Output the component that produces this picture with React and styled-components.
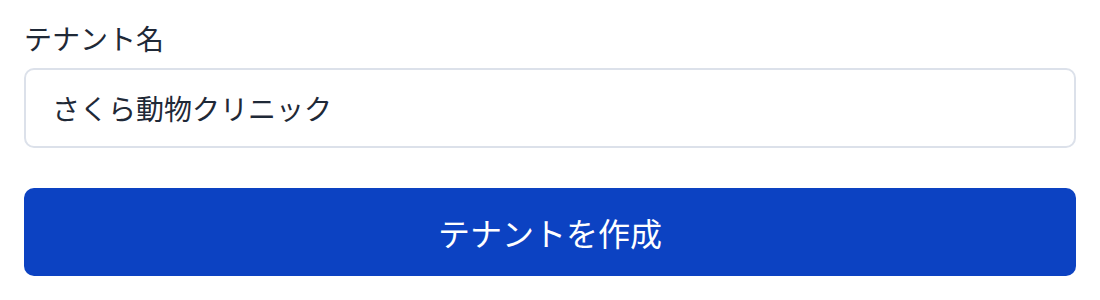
import React from "react";
import styled, { createGlobalStyle } from "styled-components";

const GlobalStyle = createGlobalStyle`
    body {
        margin: 0;
        background: #ffffff;
        font-family: "Noto Sans CJK JP", "Noto Sans", sans-serif;
    }
`;

const Form = styled.form`
    display: flex;
    flex-direction: column;
    padding: 18px 24px;
`;

const Field = styled.div`
    display: flex;
    flex-direction: column;
    gap: 10px;
    margin-bottom: 40px;
`;

const Label = styled.label`
    font-size: 28px;
    line-height: 40px;
    color: #1f2937;
`;

const TextInput = styled.input`
    box-sizing: border-box;
    height: 80px;
    padding: 0 26px;
    border: 2px solid #dce1ea;
    border-radius: 10px;
    font-family: inherit;
    font-size: 28px;
    color: #1f2937;
    outline: none;
`;

const SubmitButton = styled.button`
    height: 88px;
    border: none;
    border-radius: 10px;
    background-color: #0c42c2;
    color: #ffffff;
    font-family: inherit;
    font-size: 32px;
    cursor: pointer;
`;

function App() {
    return (
        <>
            <GlobalStyle />
            <Form onSubmit={(e) => e.preventDefault()}>
                <Field>
                    <Label htmlFor="tenant">テナント名</Label>
                    <TextInput id="tenant" type="text" defaultValue="さくら動物クリニック" />
                </Field>
                <SubmitButton type="submit">テナントを作成</SubmitButton>
            </Form>
        </>
    );
}

export default App;
